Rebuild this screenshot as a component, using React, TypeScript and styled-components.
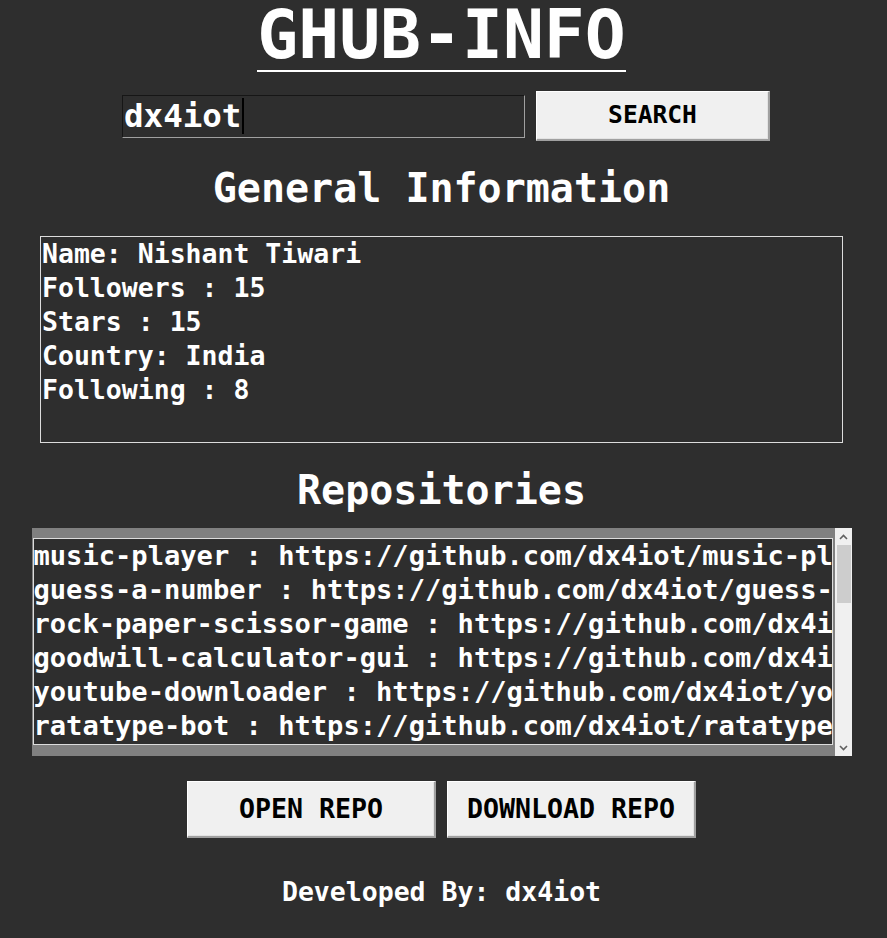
import styled, { createGlobalStyle } from "styled-components";

const GlobalStyle = createGlobalStyle`
	html, body {
		margin: 0;
		padding: 0;
		background: #2e2e2e;
	}
	body {
		font-family: "DejaVu Sans Mono", "Liberation Mono", monospace;
		font-weight: bold;
		color: #ffffff;
	}
`;

const Page = styled.div`
	width: 883px;
	min-height: 938px;
	display: flex;
	flex-direction: column;
	align-items: center;
`;

const Title = styled.h1`
	margin: 0;
	font: bold 68px/70px "DejaVu Sans Mono", monospace;
	border-bottom: 2px solid #ffffff;
	color: #ffffff;
`;

const SearchRow = styled.div`
	margin-top: 19px;
	margin-left: 9px;
	height: 50px;
	display: flex;
	align-items: center;
	gap: 11px;
`;

const InputBox = styled.div`
	box-sizing: border-box;
	width: 403px;
	height: 43px;
	display: flex;
	align-items: center;
	padding-left: 1px;
	border-top: 1px solid #161616;
	border-left: 1px solid #161616;
	border-right: 1px solid #a0a0a0;
	border-bottom: 1px solid #a0a0a0;
	font: bold 32.5px/1 "DejaVu Sans Mono", monospace;
	color: #ffffff;
`;

const Caret = styled.span`
	display: inline-block;
	width: 2px;
	height: 36px;
	margin-left: 1px;
	background: #000000;
`;

const TkButton = styled.button<{ $w: number; $h: number; $size: number }>`
	box-sizing: border-box;
	width: ${({ $w }) => $w}px;
	height: ${({ $h }) => $h}px;
	padding: 0;
	background: #f0f0f0;
	border-top: 1px solid #ffffff;
	border-left: 1px solid #ffffff;
	border-right: 2px solid #a0a0a0;
	border-bottom: 2px solid #a0a0a0;
	box-shadow: inset -1px -1px 0 #e3e3e3;
	font: bold ${({ $size }) => $size}px/1 "DejaVu Sans Mono", monospace;
	color: #000000;
	cursor: pointer;
`;

const Heading = styled.h2<{ $top: number }>`
	margin: ${({ $top }) => $top}px 0 0;
	font: bold 40px/40px "DejaVu Sans Mono", monospace;
	color: #ffffff;
`;

const InfoBox = styled.div`
	box-sizing: border-box;
	margin-top: 28px;
	width: 803px;
	height: 207px;
	border: 1px solid #dcdcdc;
	padding-left: 1px;
`;

const InfoLine = styled.div`
	font: bold 26.5px/34px "DejaVu Sans Mono", monospace;
	white-space: pre;
`;

const ListFrame = styled.div`
	margin-top: 18px;
	width: 820px;
	height: 228px;
	display: flex;
`;

const ListArea = styled.div`
	flex: 1;
	min-width: 0;
	border-style: solid;
	border-color: #808080;
	border-width: 10px 2px 11px 1px;
	display: flex;
`;

const ListInner = styled.div`
	flex: 1;
	min-width: 0;
	border: 1px solid #dcdcdc;
	overflow: hidden;
`;

const ListLine = styled.div`
	font: bold 27.1px/34px "DejaVu Sans Mono", monospace;
	white-space: pre;
`;

const Scrollbar = styled.div`
	width: 17px;
	background: #f0f0f0;
	display: flex;
	flex-direction: column;
`;

const ArrowCell = styled.div`
	height: 17px;
	display: flex;
	align-items: center;
	justify-content: center;
`;

const Thumb = styled.div`
	height: 58px;
	margin: 0 1px 0 2px;
	background: #cdcdcd;
`;

const Track = styled.div`
	flex: 1;
`;

const ButtonRow = styled.div`
	margin-top: 25px;
	display: flex;
	gap: 11px;
`;

const Footer = styled.div`
	margin-top: 37px;
	font: bold 26.5px/34px "DejaVu Sans Mono", monospace;
	white-space: pre;
`;

const Chevron = ({ up }: { up?: boolean }) => (
	<svg width="9" height="6" viewBox="0 0 9 6">
		<polyline
			points={up ? "1,5 4.5,1.5 8,5" : "1,1 4.5,4.5 8,1"}
			fill="none"
			stroke="#606060"
			strokeWidth="1.6"
		/>
	</svg>
);

const info = [
	"Name: Nishant Tiwari",
	"Followers : 15",
	"Stars : 15",
	"Country: India",
	"Following : 8",
];

const repos = [
	"music-player : https://github.com/dx4iot/music-player",
	"guess-a-number : https://github.com/dx4iot/guess-a-number",
	"rock-paper-scissor-game : https://github.com/dx4iot/rock-paper-scissor-game",
	"goodwill-calculator-gui : https://github.com/dx4iot/goodwill-calculator-gui",
	"youtube-downloader : https://github.com/dx4iot/youtube-downloader",
	"ratatype-bot : https://github.com/dx4iot/ratatype-bot",
	"more-projects : https://github.com/dx4iot/more-projects",
];

const App = () => (
	<>
		<GlobalStyle />
		<Page>
			<Title>GHUB-INFO</Title>
			<SearchRow>
				<InputBox>
					dx4iot
					<Caret />
				</InputBox>
				<TkButton $w={234} $h={50} $size={24.6} type="button">
					SEARCH
				</TkButton>
			</SearchRow>
			<Heading $top={27}>General Information</Heading>
			<InfoBox>
				{info.map(line => (
					<InfoLine key={line}>{line}</InfoLine>
				))}
			</InfoBox>
			<Heading $top={27}>Repositories</Heading>
			<ListFrame>
				<ListArea>
					<ListInner>
						{repos.map(line => (
							<ListLine key={line}>{line}</ListLine>
						))}
					</ListInner>
				</ListArea>
				<Scrollbar>
					<ArrowCell>
						<Chevron up />
					</ArrowCell>
					<Thumb />
					<Track />
					<ArrowCell>
						<Chevron />
					</ArrowCell>
				</Scrollbar>
			</ListFrame>
			<ButtonRow>
				<TkButton $w={249} $h={57} $size={26.6} type="button">
					OPEN REPO
				</TkButton>
				<TkButton $w={249} $h={57} $size={26.6} type="button">
					DOWNLOAD REPO
				</TkButton>
			</ButtonRow>
			<Footer>Developed By: dx4iot</Footer>
		</Page>
	</>
);

export default App;
